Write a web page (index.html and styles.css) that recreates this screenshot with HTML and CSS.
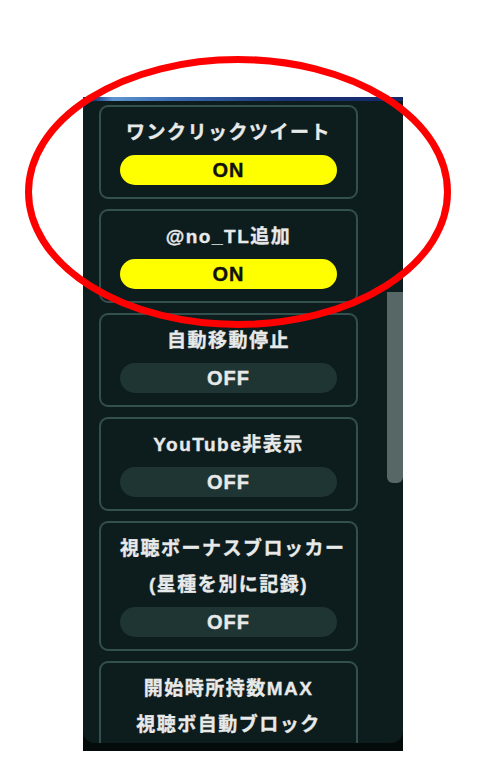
FILE: index.html
```html
<!DOCTYPE html>
<html lang="ja">
<head>
<meta charset="utf-8">
<title>設定</title>
<link rel="stylesheet" href="styles.css">
</head>
<body>
<div class="frame">
  <div class="panel">
    <div class="list">
      <div class="card">
        <div class="title">ワンクリックツイート</div>
        <div class="toggle on">ON</div>
      </div>
      <div class="card">
        <div class="title">@no_TL追加</div>
        <div class="toggle on">ON</div>
      </div>
      <div class="card">
        <div class="title">自動移動停止</div>
        <div class="toggle">OFF</div>
      </div>
      <div class="card">
        <div class="title">YouTube非表示</div>
        <div class="toggle">OFF</div>
      </div>
      <div class="card">
        <div class="title">視聴ボーナスブロッカー<br>(星種を別に記録)</div>
        <div class="toggle">OFF</div>
      </div>
      <div class="card card-cut">
        <div class="title">開始時所持数MAX<br>視聴ボ自動ブロック</div>
      </div>
    </div>
    <div class="thumb"></div>
  </div>
</div>
<svg class="annot" width="483" height="766" viewBox="0 0 483 766">
  <ellipse cx="238" cy="192" rx="209.5" ry="132.5" fill="none" stroke="#ff0000" stroke-width="7"/>
</svg>
</body>
</html>
```

FILE: styles.css
```css
html, body {
  margin: 0;
  padding: 0;
  background: #ffffff;
}

body {
  position: relative;
  width: 483px;
  height: 766px;
  overflow: hidden;
  font-family: "Liberation Sans", "Noto Sans CJK JP", sans-serif;
}

.frame {
  margin: 97px 0 0 83px;
  width: 320px;
  height: 654px;
  box-sizing: border-box;
  padding: 4px 0 8px 0;
  background:
    linear-gradient(to right, #14296b 0px, #1d3d86 12px, #5f95cf 30px, #3a6bb0 90px, #1a3478 200px, #14286a 320px) top left / 100% 14px no-repeat,
    #050b0b;
}

.panel {
  position: relative;
  height: 642px;
  background: #0d1d1d;
  border-radius: 12px 0 12px 12px;
  overflow: hidden;
}

.list {
  display: flex;
  flex-direction: column;
  gap: 10px;
  padding: 4px 0 0 16px;
}

.card {
  width: 259px;
  box-sizing: border-box;
  border: 2px solid #33504e;
  border-radius: 9px;
  padding: 8px 19px 12px 19px;
  display: flex;
  flex-direction: column;
  align-items: stretch;
}

.card-cut {
  padding-bottom: 40px;
}

.title {
  color: #e8e9e9;
  font-size: 19px;
  font-weight: 700;
  line-height: 36px;
  letter-spacing: 1.5px;
  text-align: center;
  white-space: nowrap;
  -webkit-text-stroke: 0.35px #e8e9e9;
}

.toggle {
  margin-top: 4px;
  height: 30px;
  border-radius: 15px;
  background: #1e3534;
  color: #e8eaea;
  font-size: 20px;
  font-weight: 700;
  line-height: 30px;
  letter-spacing: 1px;
  text-align: center;
  -webkit-text-stroke: 0.4px #e8eaea;
}

.toggle.on {
  background: #ffff00;
  color: #111111;
  -webkit-text-stroke: 0.4px #111111;
}

.thumb {
  position: absolute;
  right: 0;
  top: 191px;
  width: 16px;
  height: 191px;
  background: #566766;
  border-radius: 0 0 6px 6px;
}

.annot {
  position: absolute;
  left: 0;
  top: 0;
  pointer-events: none;
}
```
